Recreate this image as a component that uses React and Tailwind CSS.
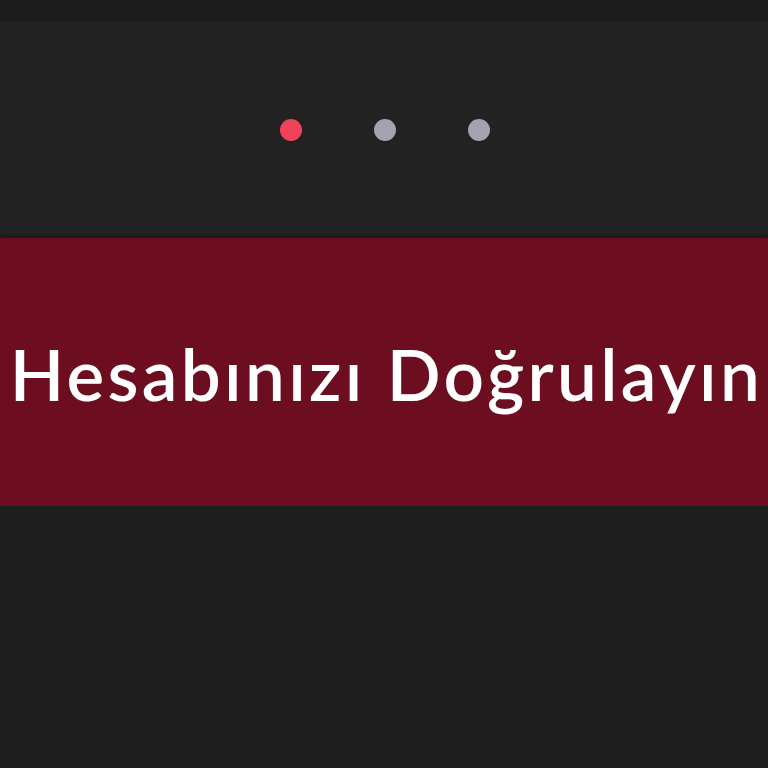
export default function App() {
  return (
    <div className="w-[768px] h-[768px] flex flex-col bg-[#1f1f1f] overflow-hidden">
      <div className="h-[21px] bg-[#1c1c1c]" />
      <div className="h-[217px] bg-[#222223] flex items-center justify-center gap-[72px] pl-[2px]">
        <span className="w-[22px] h-[22px] rounded-full bg-[#f0435a]" />
        <span className="w-[22px] h-[22px] rounded-full bg-[#a4a4b0]" />
        <span className="w-[22px] h-[22px] rounded-full bg-[#a4a4b0]" />
      </div>
      <div className="h-[268px] bg-[#6d0d20] flex items-center justify-center pl-[5px] shadow-[0_-2px_4px_rgba(0,0,0,0.3)]">
        <h1
          className="text-white text-[71px] leading-none whitespace-nowrap font-semibold tracking-[3.3px] pt-[2px]"
          style={{ fontFamily: "Lato, 'Noto Sans', sans-serif" }}
        >
          Hesabınızı Doğrulayın
        </h1>
      </div>
      <div className="flex-1 bg-[#1f1f1f]" />
    </div>
  );
}
